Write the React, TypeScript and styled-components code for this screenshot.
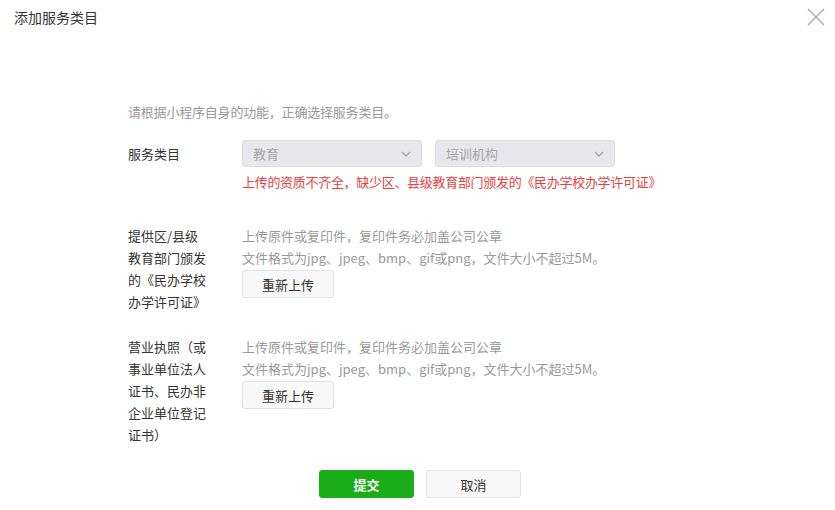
import React from 'react'
import styled, {createGlobalStyle} from 'styled-components'

const GlobalStyle = createGlobalStyle`
  html, body {
    margin: 0;
    padding: 0;
    background: #fff;
  }
  body {
    font-family: "Noto Sans CJK SC", "Microsoft YaHei", "Noto Sans", sans-serif;
    font-size: 13px;
    color: #333;
  }
  * { box-sizing: border-box; }
`

const Dialog = styled.div`
  width: 835px;
  height: 510px;
  background: #fff;
  display: flex;
  flex-direction: column;
`

const Header = styled.div`
  height: 34px;
  padding: 0 9px 0 14px;
  display: flex;
  align-items: center;
  justify-content: space-between;
`

const Title = styled.h3`
  margin: 0;
  font-size: 14px;
  font-weight: 400;
  color: #353535;
`

const CloseButton = styled.button`
  width: 20px;
  height: 20px;
  padding: 0;
  border: 0;
  background: none;
  cursor: pointer;
  display: flex;
  align-items: center;
  justify-content: center;
`

const Body = styled.div`
  padding: 67px 0 0 128px;
  display: flex;
  flex-direction: column;
`

const Intro = styled.p`
  margin: 0 0 17px;
  line-height: 22px;
  color: #999;
  letter-spacing: -0.2px;
`

const FormRow = styled.div<{$gap?: number}>`
  display: flex;
  align-items: flex-start;
  margin-bottom: ${p => p.$gap ?? 0}px;
`

const Label = styled.div<{$single?: boolean}>`
  width: 80px;
  margin-right: 34px;
  line-height: ${p => (p.$single ? 27 : 22)}px;
  color: #353535;
  flex-shrink: 0;
`

const Field = styled.div`
  display: flex;
  flex-direction: column;
`

const SelectRow = styled.div`
  display: flex;
  gap: 13px;
`

const Select = styled.div`
  width: 180px;
  height: 27px;
  padding: 0 10px;
  border: 1px solid #dedee2;
  border-radius: 3px;
  background: #e8e8ec;
  color: #a5a5a5;
  display: flex;
  align-items: center;
  justify-content: space-between;
`

const ErrorText = styled.div`
  margin-top: 4px;
  line-height: 22px;
  color: #e64340;
  letter-spacing: -0.3px;
`

const Hint = styled.div`
  line-height: 22px;
  color: #9a9a9a;
`

const UploadButton = styled.button`
  margin-top: 1px;
  width: 92px;
  height: 28px;
  border: 1px solid #e1e1e1;
  border-radius: 3px;
  background: #f8f8f8;
  color: #353535;
  font: inherit;
  font-size: 13px;
  cursor: pointer;
`

const Footer = styled.div`
  margin-top: 24px;
  display: flex;
  justify-content: center;
  gap: 12px;
  padding-left: 5px;
`

const FooterButton = styled.button<{$primary?: boolean}>`
  width: 95px;
  height: 28px;
  border-radius: 3px;
  font: inherit;
  font-size: 13px;
  cursor: pointer;
  border: 1px solid ${p => (p.$primary ? '#1aad19' : '#e3e3e3')};
  background: ${p => (p.$primary ? '#1aad19' : '#f8f8f8')};
  color: ${p => (p.$primary ? '#fff' : '#353535')};
  font-weight: ${p => (p.$primary ? 700 : 400)};
`

const Chevron = () => (
  <svg width="10" height="6" viewBox="0 0 10 6" fill="none">
    <path d="M1 1l4 4 4-4" stroke="#a5a5a5" strokeWidth="1.4" />
  </svg>
)

const CloseIcon = () => (
  <svg width="18" height="18" viewBox="0 0 18 18" fill="none">
    <path d="M1 1l16 16M17 1L1 17" stroke="#a9a9a9" strokeWidth="1.3" />
  </svg>
)

const UploadField = () => (
  <Field>
    <Hint>上传原件或复印件，复印件务必加盖公司公章</Hint>
    <Hint>文件格式为jpg、jpeg、bmp、gif或png，文件大小不超过5M。</Hint>
    <UploadButton>重新上传</UploadButton>
  </Field>
)

export default function App() {
  return (
    <>
      <GlobalStyle />
      <Dialog>
        <Header>
          <Title>添加服务类目</Title>
          <CloseButton aria-label="关闭">
            <CloseIcon />
          </CloseButton>
        </Header>
        <Body>
          <Intro>请根据小程序自身的功能，正确选择服务类目。</Intro>
          <FormRow $gap={32}>
            <Label $single>服务类目</Label>
            <Field>
              <SelectRow>
                <Select>
                  <span>教育</span>
                  <Chevron />
                </Select>
                <Select>
                  <span>培训机构</span>
                  <Chevron />
                </Select>
              </SelectRow>
              <ErrorText>上传的资质不齐全，缺少区、县级教育部门颁发的《民办学校办学许可证》</ErrorText>
            </Field>
          </FormRow>
          <FormRow $gap={23}>
            <Label>提供区/县级教育部门颁发的《民办学校办学许可证》</Label>
            <UploadField />
          </FormRow>
          <FormRow>
            <Label>营业执照（或事业单位法人证书、民办非企业单位登记证书）</Label>
            <UploadField />
          </FormRow>
        </Body>
        <Footer>
          <FooterButton $primary>提交</FooterButton>
          <FooterButton>取消</FooterButton>
        </Footer>
      </Dialog>
    </>
  )
}
